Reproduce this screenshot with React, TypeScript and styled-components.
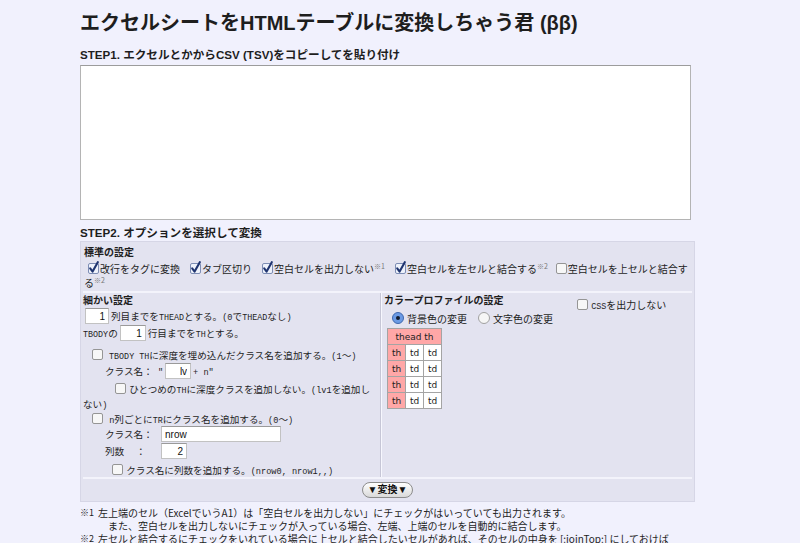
import * as React from 'react';
import styled, { createGlobalStyle } from 'styled-components';

const GlobalStyle = createGlobalStyle`
  html, body {
    margin: 0;
    padding: 0;
    background: #f1f1fd;
  }
  body {
    font-family: "Liberation Sans", "Noto Sans CJK JP", sans-serif;
    color: #1e1e1e;
  }
`;

const Page = styled.div`
  width: 615px;
  margin-left: 80px;
  display: flex;
  flex-direction: column;
`;

const Title = styled.h1`
  margin: 10px 0 0;
  font-size: 20px;
  line-height: 26px;
  font-weight: bold;
  white-space: nowrap;
`;

const StepHeading = styled.h2<{ $top: number }>`
  margin: ${p => p.$top}px 0 0;
  font-size: 11.6px;
  line-height: 16px;
  font-weight: bold;
`;

const Source = styled.textarea`
  margin-top: 2px;
  width: 611px;
  height: 155px;
  box-sizing: border-box;
  border: 1px solid #b4b4b4;
  border-top-color: #9c9c9c;
  background: #fff;
  resize: none;
`;

const Panel = styled.div`
  border: 1px solid #d6d6e6;
  background: #e3e3f0;
  display: flex;
  flex-direction: column;
`;

const Standard = styled.div`
  padding: 4px 2px 1px 1px;
  border-bottom: 2px solid #f3f3fb;
  margin: 0 2px;
`;

const SubHead = styled.div<{ $top?: number }>`
  font-size: 10px;
  line-height: 14px;
  font-weight: bold;
  padding-top: ${p => p.$top ?? 0}px;
`;

const OptionFlow = styled.div`
  margin-top: 2px;
  font-family: "Noto Sans CJK JP", sans-serif;
  font-size: 10px;
  line-height: 14px;
`;

const Opt = styled.span`
  margin-right: 6px;
`;

const Note = styled.sup`
  font-size: 7px;
  color: #777;
  vertical-align: 4px;
  line-height: 0;
`;

const Details = styled.div`
  display: grid;
  grid-template-columns: 300px 1fr;
`;

const LeftCol = styled.div`
  padding: 0 8px 0 2px;
  border-right: 1px solid #c6c6d6;
`;

const RightCol = styled.div`
  padding-left: 2px;
  border-left: 1px solid #f7f7fe;
  display: grid;
  grid-template-columns: 193px 1fr;
  align-items: start;
  align-content: start;
`;

const Row = styled.div<{ $top?: number; $indent?: number; $h?: number }>`
  height: ${p => p.$h ?? 17}px;
  line-height: ${p => p.$h ?? 17}px;
  margin-top: ${p => p.$top ?? 0}px;
  padding-left: ${p => p.$indent ?? 0}px;
  font-family: "Noto Sans CJK JP", sans-serif;
  font-size: 9.6px;
  white-space: nowrap;
`;

const FlowRow = styled.div<{ $top?: number; $indent: number }>`
  margin-top: ${p => p.$top ?? 0}px;
  text-indent: ${p => p.$indent}px;
  font-family: "Noto Sans CJK JP", sans-serif;
  font-size: 9.6px;
  line-height: 15px;
`;

const Caps = styled.span`
  font-family: "Liberation Sans Narrow", "Liberation Mono", monospace;
  font-size: 8.4px;
  line-height: 1;
`;

const Mono = styled.span`
  font-family: "Liberation Mono", monospace;
  font-size: 8.6px;
  line-height: 1;
`;

const Field = styled.input<{ $w: number; $align?: 'left' | 'right' }>`
  width: ${p => p.$w}px;
  height: 16px;
  box-sizing: border-box;
  margin: 0 2px;
  padding: 0 3px;
  vertical-align: top;
  border: 1px solid #c2c2c2;
  border-top-color: #9a9a9a;
  background: #fff;
  font: 10px "Liberation Sans", sans-serif;
  color: #111;
  text-align: ${p => p.$align ?? 'right'};
`;

const FieldLabel = styled.span`
  display: inline-block;
  width: 54px;
`;

const ColorHead = styled.div`
  display: flex;
  flex-direction: column;
  align-items: flex-start;
`;

const RadioRow = styled.div`
  display: flex;
  align-items: center;
  margin-top: 3px;
  padding-left: 8px;
  height: 14px;
  font-size: 10px;
  white-space: nowrap;
`;

const RadioLabel = styled.span`
  margin: 0 11px 0 3px;
`;

const Preview = styled.table`
  margin: 3px 0 0 3px;
  border-collapse: collapse;
  font: 9px "DejaVu Sans", sans-serif;
  color: #222;
`;

const Cell = styled.td<{ $head?: boolean }>`
  border: 1px solid #a4a4a4;
  min-width: 17px;
  height: 15px;
  padding: 0;
  text-align: center;
  background: ${p => (p.$head ? '#ffa7a7' : '#fff')};
`;

const CssOpt = styled.div`
  margin-top: 5px;
  height: 14px;
  line-height: 14px;
  font-family: "Noto Sans CJK JP", sans-serif;
  font-size: 10px;
  white-space: nowrap;
`;

const Footer = styled.div`
  border-top: 2px solid #f3f3fb;
  margin: 0 2px;
  padding: 3px 0;
  display: flex;
  justify-content: center;
`;

const ConvertButton = styled.button`
  height: 16px;
  padding: 0 5px;
  border-radius: 8px;
  border: 1px solid #8c8c8c;
  background: linear-gradient(#ffffff, #d9d9d9);
  font: bold 10px "Liberation Sans", "Noto Sans CJK JP", sans-serif;
  color: #111;
  line-height: 14px;
`;

const Notes = styled.div`
  margin-top: 4px;
  font-family: "Noto Sans CJK JP", sans-serif;
  font-size: 10px;
  line-height: 13px;
  white-space: nowrap;
`;

const NoteLine = styled.div`
  display: flex;
`;

const Marker = styled.span`
  width: 18px;
  font-size: 9px;
`;

const CheckSvg = styled.svg<{ $left: number }>`
  margin: 0 1px 0 ${p => p.$left}px;
  vertical-align: -1px;
  flex: none;
  overflow: visible;
`;

const Check = ({ on = false, left = 3 }: { on?: boolean; left?: number }) => (
  <CheckSvg $left={left} width="11" height="11" viewBox="0 0 11 11">
    <rect x="0.5" y="0.5" width="10" height="10" rx="1.5" fill={on ? '#eef2fb' : '#f7f7f7'} stroke={on ? '#7d8db4' : '#959595'} />
    {on && <path d="M2.2 5.4 L4.6 8.6 L9.8 -0.8" fill="none" stroke="#1f3470" strokeWidth="2.1" strokeLinecap="round" strokeLinejoin="round" />}
  </CheckSvg>
);

const Radio = ({ on = false }: { on?: boolean }) => (
  <svg width="12" height="12" viewBox="0 0 12 12">
    <circle cx="6" cy="6" r="5.5" fill={on ? '#6b9ae4' : '#f6f6f6'} stroke={on ? '#3f68ad' : '#a0a0a0'} />
    {on && <circle cx="6" cy="6" r="2" fill="#121a2c" />}
  </svg>
);

export default function App() {
  return (
    <Page>
      <GlobalStyle />
      <Title>エクセルシートをHTMLテーブルに変換しちゃう君 (ββ)</Title>

      <StepHeading $top={11}>STEP1. エクセルとかからCSV (TSV)をコピーしてを貼り付け</StepHeading>
      <Source />

      <StepHeading $top={5}>STEP2. オプションを選択して変換</StepHeading>
      <Panel>
        <Standard>
          <SubHead>標準の設定</SubHead>
          <OptionFlow>
            <Opt><Check on left={4} />改行をタグに変換</Opt>
            <Opt><Check on left={4} />タブ区切り</Opt>
            <Opt><Check on left={4} />空白セルを出力しない<Note>※1</Note></Opt>
            <Opt><Check on left={4} />空白セルを左セルと結合する<Note>※2</Note></Opt>
            <Opt><Check left={2} />空白セルを上セルと結合する<Note>※2</Note></Opt>
          </OptionFlow>
        </Standard>

        <Details>
          <LeftCol>
            <SubHead $top={1}>細かい設定</SubHead>
            <Row>
              <Field $w={24} readOnly value="1" />
              列目までを<Caps>THEAD</Caps>とする。<Mono>(0</Mono>で<Caps>THEAD</Caps>なし<Mono>)</Mono>
            </Row>
            <Row>
              <Caps>TBODY</Caps>の
              <Field $w={26} readOnly value="1" />
              行目までを<Caps>TH</Caps>とする。
            </Row>
            <Row $top={6} $h={14} $indent={6}>
              <Check /><Caps>&nbsp;TBODY TH</Caps>に深度を埋め込んだクラス名を追加する。<Mono>(1</Mono>〜<Mono>)</Mono>
            </Row>
            <Row $top={1} $indent={22}>
              クラス名：<Mono>&nbsp;"</Mono>
              <Field $w={26} readOnly value="lv" />
              <Mono>+ n"</Mono>
            </Row>
            <FlowRow $top={2} $indent={29}>
              <Check />&nbsp;ひとつめの<Caps>TH</Caps>に深度クラスを追加しない。<Mono>(lv1</Mono>を追加しない<Mono>)</Mono>
            </FlowRow>
            <Row $h={14} $indent={6}>
              <Check /><Mono>&nbsp;n</Mono>列ごとに<Caps>TR</Caps>にクラス名を追加する。<Mono>(0</Mono>〜<Mono>)</Mono>
            </Row>
            <Row $indent={22}>
              <FieldLabel>クラス名：</FieldLabel>
              <Field $w={120} $align="left" readOnly value="nrow" />
            </Row>
            <Row $h={16} $indent={22}>
              <FieldLabel>列数　 ：</FieldLabel>
              <Field $w={26} readOnly value="2" />
            </Row>
            <Row $top={4} $h={14} $indent={26}>
              <Check />&nbsp;クラス名に列数を追加する。<Mono>(nrow0, nrow1,,)</Mono>
            </Row>
          </LeftCol>

          <RightCol>
            <ColorHead>
              <SubHead $top={1}>カラープロファイルの設定</SubHead>
              <RadioRow>
                <Radio on />
                <RadioLabel>背景色の変更</RadioLabel>
                <Radio />
                <RadioLabel>文字色の変更</RadioLabel>
              </RadioRow>
              <Preview>
                <tbody>
                  <tr>
                    <Cell $head colSpan={3}>thead th</Cell>
                  </tr>
                  {[0, 1, 2, 3].map(i => (
                    <tr key={i}>
                      <Cell $head>th</Cell>
                      <Cell>td</Cell>
                      <Cell>td</Cell>
                    </tr>
                  ))}
                </tbody>
              </Preview>
            </ColorHead>
            <CssOpt>
              <Check left={0} />
              &nbsp;<Caps>CSS</Caps>を出力しない
            </CssOpt>
          </RightCol>
        </Details>

        <Footer>
          <ConvertButton>▼変換▼</ConvertButton>
        </Footer>
      </Panel>

      <Notes>
        <NoteLine>
          <Marker>※1</Marker>
          <span>左上端のセル（ExcelでいうA1）は「空白セルを出力しない」にチェックがはいっていても出力されます。</span>
        </NoteLine>
        <NoteLine>
          <Marker />
          <span>　また、空白セルを出力しないにチェックが入っている場合、左端、上端のセルを自動的に結合します。</span>
        </NoteLine>
        <NoteLine>
          <Marker>※2</Marker>
          <span>左セルと結合するにチェックをいれている場合に上セルと結合したいセルがあれば、そのセルの中身を [:joinTop:] にしておけば</span>
        </NoteLine>
      </Notes>
    </Page>
  );
}
